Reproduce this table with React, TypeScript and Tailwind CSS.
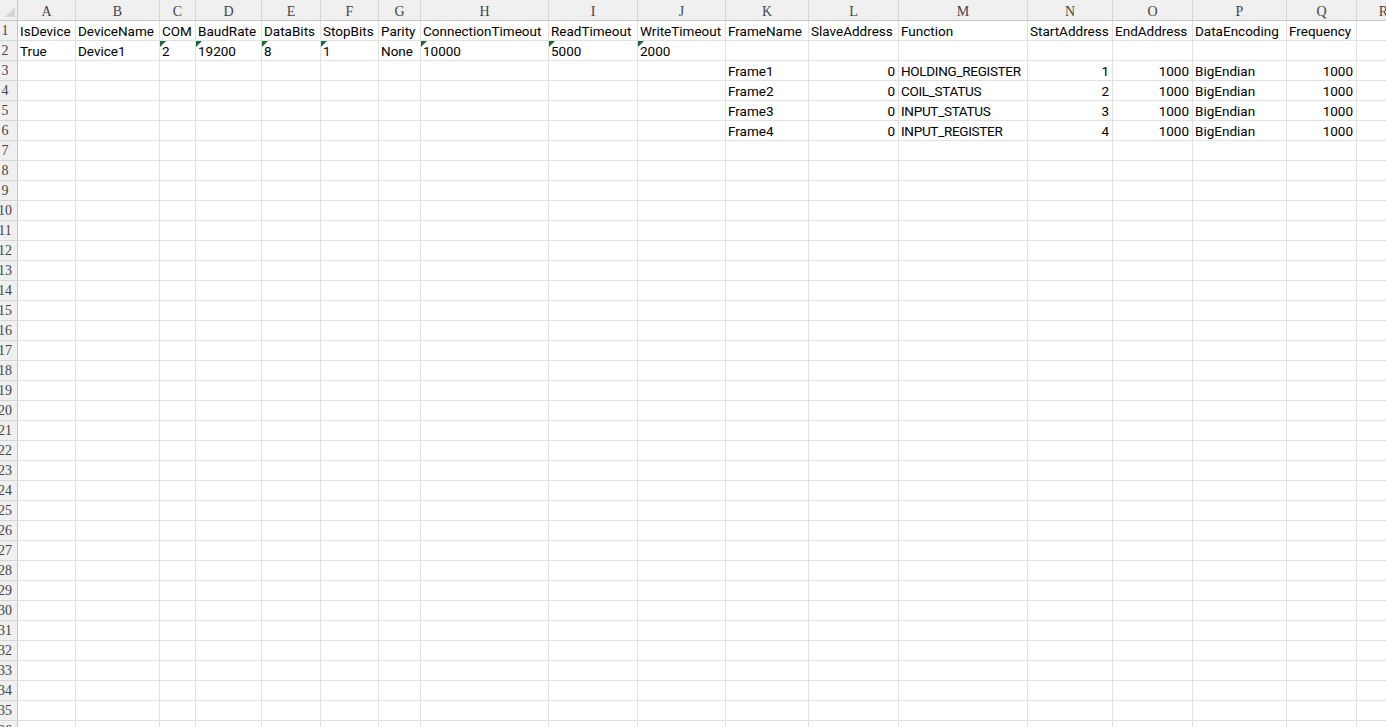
import React from "react";

// column letters and their widths (px, including the 1px right grid line)
const columns = [
  { key: "A", w: 58 },
  { key: "B", w: 84 },
  { key: "C", w: 36 },
  { key: "D", w: 66 },
  { key: "E", w: 59 },
  { key: "F", w: 58 },
  { key: "G", w: 42 },
  { key: "H", w: 128 },
  { key: "I", w: 89 },
  { key: "J", w: 88 },
  { key: "K", w: 83 },
  { key: "L", w: 90 },
  { key: "M", w: 129 },
  { key: "N", w: 85 },
  { key: "O", w: 80 },
  { key: "P", w: 94 },
  { key: "Q", w: 70 },
  { key: "R", w: 54 },
];

type Cell = { v: string; right?: boolean; flag?: boolean; tight?: boolean };

const headerRow: Cell[] = [
  "IsDevice",
  "DeviceName",
  "COM",
  "BaudRate",
  "DataBits",
  "StopBits",
  "Parity",
  "ConnectionTimeout",
  "ReadTimeout",
  "WriteTimeout",
  "FrameName",
  "SlaveAddress",
  "Function",
  "StartAddress",
  "EndAddress",
  "DataEncoding",
  "Frequency",
].map((v) => ({ v }));

// numbers stored as text get the little green corner
const deviceRow: Cell[] = [
  { v: "True" },
  { v: "Device1" },
  { v: "2", flag: true },
  { v: "19200", flag: true },
  { v: "8", flag: true },
  { v: "1", flag: true },
  { v: "None" },
  { v: "10000", flag: true },
  { v: "5000", flag: true },
  { v: "2000", flag: true },
];

const frames = [
  ["Frame1", "HOLDING_REGISTER", "1"],
  ["Frame2", "COIL_STATUS", "2"],
  ["Frame3", "INPUT_STATUS", "3"],
  ["Frame4", "INPUT_REGISTER", "4"],
];

const frameRows: Cell[][] = frames.map(([name, fn, start]) => [
  ...Array.from({ length: 10 }, () => ({ v: "" })),
  { v: name },
  { v: "0", right: true },
  { v: fn, tight: true },
  { v: start, right: true },
  { v: "1000", right: true },
  { v: "BigEndian" },
  { v: "1000", right: true },
]);

const rows: Cell[][] = [headerRow, deviceRow, ...frameRows];
const ROW_COUNT = 36;

export default function App() {
  return (
    <div className="h-[727px] w-full overflow-hidden bg-white">
      <div className="flex flex-col w-max">
        {/* column letters */}
        <div className="flex h-[21px]">
          <div className="relative w-[18px] shrink-0 bg-[#f0f0f0] border-r border-b border-[#c6c6c6]">
            <svg className="absolute right-[2px] bottom-[3px]" width="10" height="10" viewBox="0 0 10 10">
              <polygon points="10,0 10,10 0,10" fill="#d6d6d6" />
            </svg>
          </div>
          {columns.map((c) => (
            <div
              key={c.key}
              style={{ width: c.w }}
              className="shrink-0 bg-[#f0f0f0] border-r border-b border-[#d5d5d5] border-b-[#c6c6c6] flex items-center justify-center pt-[2px] text-[14px] text-[#454545] font-['Liberation_Serif',serif]"
            >
              {c.key}
            </div>
          ))}
        </div>

        {Array.from({ length: ROW_COUNT }, (_, r) => {
          const data = rows[r] ?? [];
          return (
            <div key={r} className="flex h-5">
              <div className="w-[18px] shrink-0 bg-[#f0f0f0] border-r border-b border-r-[#c6c6c6] border-b-[#d5d5d5] flex items-center justify-center pr-[7px] text-[14px] text-[#454545] font-['Liberation_Serif',serif] whitespace-nowrap">
                {r + 1}
              </div>
              {columns.map((c, i) => {
                const cell = data[i];
                return (
                  <div
                    key={c.key}
                    style={{ width: c.w }}
                    className={
                      "relative shrink-0 overflow-hidden border-r border-b border-[#e1e1e1] flex items-center pl-[2px] pt-[1px] text-[13.5px] text-black font-['Roboto',Arial,sans-serif] whitespace-nowrap " +
                      (cell?.right ? "justify-end pr-[3px] " : "justify-start ") +
                      (cell?.tight ? "tracking-[-0.3px]" : "")
                    }
                  >
                    {cell?.flag && (
                      <svg className="absolute left-0 top-0" width="6" height="6" viewBox="0 0 6 6">
                        <polygon points="0,0 6,0 0,6" fill="#1b6b3a" />
                      </svg>
                    )}
                    {cell?.v}
                  </div>
                );
              })}
            </div>
          );
        })}
      </div>
    </div>
  );
}
